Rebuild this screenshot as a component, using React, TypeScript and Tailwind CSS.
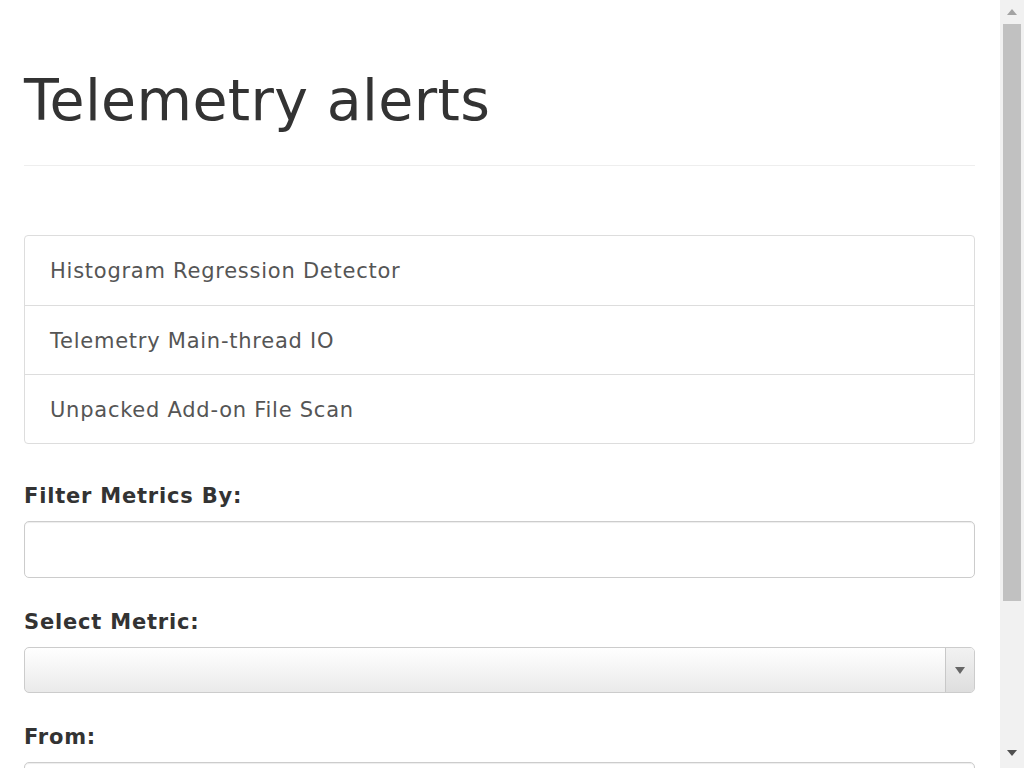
import React from "react";

function Scrollbar() {
  return (
    <div className="flex h-[768px] w-[24px] shrink-0 flex-col items-center bg-[#f1f1f1]">
      <div className="flex h-[24px] w-full items-center justify-center">
        <svg width="10" height="6" viewBox="0 0 10 6">
          <path d="M0 6 L10 6 L5 0 Z" fill="#a3a3a3" />
        </svg>
      </div>
      <div className="h-[577px] w-[18px] bg-[#c1c1c1]" />
      <div className="flex-1" />
      <div className="flex h-[30px] w-full items-center justify-center">
        <svg width="10" height="6" viewBox="0 0 10 6">
          <path d="M0 0 L10 0 L5 6 Z" fill="#505050" />
        </svg>
      </div>
    </div>
  );
}

export default function App() {
  return (
    <div
      className="flex h-[768px] overflow-hidden bg-white text-[#333]"
      style={{ fontFamily: '"DejaVu Sans", Verdana, sans-serif' }}
    >
      <div className="min-w-0 flex-1 pl-[24px] pr-[25px]">
        <div className="pt-[60px]">
          <h1 className="text-[57px] leading-[80px] font-normal tracking-[0.35px] text-[#333]">Telemetry alerts</h1>
        </div>
        <div className="mt-[25px] h-px bg-[#eee]" />
        <div className="mt-[69px] rounded-[4px] border border-[#ddd]">
          {["Histogram Regression Detector", "Telemetry Main-thread IO", "Unpacked Add-on File Scan"].map((t, i) => (
            <div
              key={t}
              className={`flex h-[69px] items-center px-[25px] pt-[3px] text-[21px] tracking-[0.75px] text-[#555] ${i > 0 ? "border-t border-[#ddd]" : ""}`}
            >
              {t}
            </div>
          ))}
        </div>
        <div className="mt-[37px] text-[21px] font-bold leading-[30px] tracking-[0.8px]">Filter Metrics By:</div>
        <div className="mt-[10px] h-[57px] rounded-[5px] border border-[#ccc] bg-white shadow-[inset_0_1px_1px_rgba(0,0,0,0.075)]" />
        <div className="mt-[29px] text-[21px] font-bold leading-[30px] tracking-[0.8px]">Select Metric:</div>
        <div className="mt-[10px] flex h-[46px] overflow-hidden rounded-[5px] border border-[#ccc] bg-gradient-to-b from-white to-[#eaeaea]">
          <div className="flex-1" />
          <div className="flex w-[29px] items-center justify-center border-l border-[#c8c8c8] bg-gradient-to-b from-[#f2f2f2] to-[#dedede]">
            <svg width="10" height="7" viewBox="0 0 10 7">
              <path d="M0 0 L10 0 L5 7 Z" fill="#666" />
            </svg>
          </div>
        </div>
        <div className="mt-[29px] text-[21px] font-bold leading-[30px] tracking-[0.8px]">From:</div>
        <div className="mt-[10px] h-[57px] rounded-[5px] border border-[#ccc] bg-white shadow-[inset_0_1px_1px_rgba(0,0,0,0.075)]" />
      </div>
      <Scrollbar />
    </div>
  );
}
